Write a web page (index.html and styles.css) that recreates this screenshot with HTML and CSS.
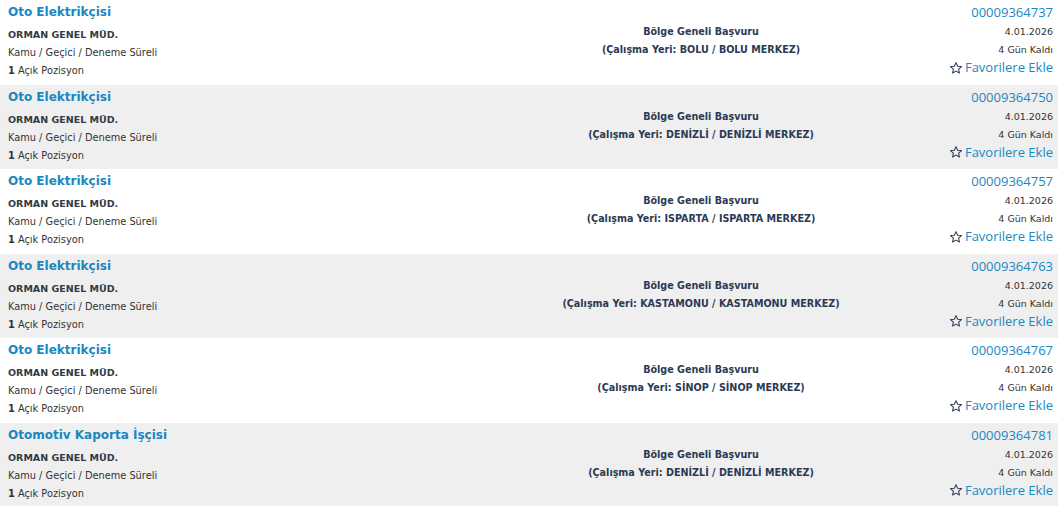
FILE: index.html
```html
<!DOCTYPE html>
<html lang="tr">
<head>
<meta charset="utf-8">
<link rel="stylesheet" href="styles.css">
</head>
<body>
<div class="list">
  <div class="row">
    <div class="col-left">
      <a class="title">Oto Elektrikçisi</a>
      <div class="org">ORMAN GENEL MÜD.</div>
      <div class="meta">Kamu / Geçici / Deneme Süreli</div>
      <div class="meta"><b>1</b> Açık Pozisyon</div>
    </div>
    <div class="col-mid">
      <div>Bölge Geneli Başvuru</div>
      <div>(Çalışma Yeri: BOLU / BOLU MERKEZ)</div>
    </div>
    <div class="col-right">
      <a class="code">00009364737</a>
      <div class="date">4.01.2026</div>
      <div class="date">4 Gün Kaldı</div>
      <a class="fav"><svg class="star" viewBox="0 0 24 24"><path d="M12 2.8l2.8 6.1 6.6.7-4.9 4.5 1.4 6.5L12 17.3l-5.9 3.3 1.4-6.5-4.9-4.5 6.6-.7z"/></svg>Favorilere Ekle</a>
    </div>
  </div>
  <div class="row alt">
    <div class="col-left">
      <a class="title">Oto Elektrikçisi</a>
      <div class="org">ORMAN GENEL MÜD.</div>
      <div class="meta">Kamu / Geçici / Deneme Süreli</div>
      <div class="meta"><b>1</b> Açık Pozisyon</div>
    </div>
    <div class="col-mid">
      <div>Bölge Geneli Başvuru</div>
      <div>(Çalışma Yeri: DENİZLİ / DENİZLİ MERKEZ)</div>
    </div>
    <div class="col-right">
      <a class="code">00009364750</a>
      <div class="date">4.01.2026</div>
      <div class="date">4 Gün Kaldı</div>
      <a class="fav"><svg class="star" viewBox="0 0 24 24"><path d="M12 2.8l2.8 6.1 6.6.7-4.9 4.5 1.4 6.5L12 17.3l-5.9 3.3 1.4-6.5-4.9-4.5 6.6-.7z"/></svg>Favorilere Ekle</a>
    </div>
  </div>
  <div class="row">
    <div class="col-left">
      <a class="title">Oto Elektrikçisi</a>
      <div class="org">ORMAN GENEL MÜD.</div>
      <div class="meta">Kamu / Geçici / Deneme Süreli</div>
      <div class="meta"><b>1</b> Açık Pozisyon</div>
    </div>
    <div class="col-mid">
      <div>Bölge Geneli Başvuru</div>
      <div>(Çalışma Yeri: ISPARTA / ISPARTA MERKEZ)</div>
    </div>
    <div class="col-right">
      <a class="code">00009364757</a>
      <div class="date">4.01.2026</div>
      <div class="date">4 Gün Kaldı</div>
      <a class="fav"><svg class="star" viewBox="0 0 24 24"><path d="M12 2.8l2.8 6.1 6.6.7-4.9 4.5 1.4 6.5L12 17.3l-5.9 3.3 1.4-6.5-4.9-4.5 6.6-.7z"/></svg>Favorilere Ekle</a>
    </div>
  </div>
  <div class="row alt">
    <div class="col-left">
      <a class="title">Oto Elektrikçisi</a>
      <div class="org">ORMAN GENEL MÜD.</div>
      <div class="meta">Kamu / Geçici / Deneme Süreli</div>
      <div class="meta"><b>1</b> Açık Pozisyon</div>
    </div>
    <div class="col-mid">
      <div>Bölge Geneli Başvuru</div>
      <div>(Çalışma Yeri: KASTAMONU / KASTAMONU MERKEZ)</div>
    </div>
    <div class="col-right">
      <a class="code">00009364763</a>
      <div class="date">4.01.2026</div>
      <div class="date">4 Gün Kaldı</div>
      <a class="fav"><svg class="star" viewBox="0 0 24 24"><path d="M12 2.8l2.8 6.1 6.6.7-4.9 4.5 1.4 6.5L12 17.3l-5.9 3.3 1.4-6.5-4.9-4.5 6.6-.7z"/></svg>Favorilere Ekle</a>
    </div>
  </div>
  <div class="row">
    <div class="col-left">
      <a class="title">Oto Elektrikçisi</a>
      <div class="org">ORMAN GENEL MÜD.</div>
      <div class="meta">Kamu / Geçici / Deneme Süreli</div>
      <div class="meta"><b>1</b> Açık Pozisyon</div>
    </div>
    <div class="col-mid">
      <div>Bölge Geneli Başvuru</div>
      <div>(Çalışma Yeri: SİNOP / SİNOP MERKEZ)</div>
    </div>
    <div class="col-right">
      <a class="code">00009364767</a>
      <div class="date">4.01.2026</div>
      <div class="date">4 Gün Kaldı</div>
      <a class="fav"><svg class="star" viewBox="0 0 24 24"><path d="M12 2.8l2.8 6.1 6.6.7-4.9 4.5 1.4 6.5L12 17.3l-5.9 3.3 1.4-6.5-4.9-4.5 6.6-.7z"/></svg>Favorilere Ekle</a>
    </div>
  </div>
  <div class="row alt">
    <div class="col-left">
      <a class="title">Otomotiv Kaporta İşçisi</a>
      <div class="org">ORMAN GENEL MÜD.</div>
      <div class="meta">Kamu / Geçici / Deneme Süreli</div>
      <div class="meta"><b>1</b> Açık Pozisyon</div>
    </div>
    <div class="col-mid">
      <div>Bölge Geneli Başvuru</div>
      <div>(Çalışma Yeri: DENİZLİ / DENİZLİ MERKEZ)</div>
    </div>
    <div class="col-right">
      <a class="code">00009364781</a>
      <div class="date">4.01.2026</div>
      <div class="date">4 Gün Kaldı</div>
      <a class="fav"><svg class="star" viewBox="0 0 24 24"><path d="M12 2.8l2.8 6.1 6.6.7-4.9 4.5 1.4 6.5L12 17.3l-5.9 3.3 1.4-6.5-4.9-4.5 6.6-.7z"/></svg>Favorilere Ekle</a>
    </div>
  </div>
</div>
</body>
</html>
```
FILE: styles.css
```css
html, body {
  margin: 0;
  padding: 0;
  background: #ffffff;
}
body {
  font-family: "DejaVu Sans", Verdana, sans-serif;
  color: #333333;
}
.list {
  width: 1058px;
}
.row {
  display: grid;
  grid-template-columns: 492px 402px 1fr;
  height: 84.5px;
  box-sizing: border-box;
  padding: 2px 5px 0 8px;
  background: #ffffff;
}
.row.alt {
  background: #efefef;
}
.col-left {
  display: flex;
  flex-direction: column;
}
.title {
  font-size: 12px;
  font-weight: bold;
  color: #1a87c2;
  line-height: 20px;
}
.org {
  font-size: 9.5px;
  font-weight: bold;
  color: #333a45;
  line-height: 18px;
  margin-top: 4px;
}
.meta {
  font-size: 9.8px;
  color: #333333;
  line-height: 18px;
}
.meta b {
  font-weight: bold;
}
.col-mid {
  display: flex;
  flex-direction: column;
  align-items: center;
  padding-top: 21px;
  font-size: 9.6px;
  font-weight: bold;
  color: #2c3a55;
  line-height: 18px;
}
.col-right {
  display: flex;
  flex-direction: column;
  align-items: flex-end;
}
.code {
  font-family: "Open Sans", sans-serif;
  font-size: 13px;
  color: #1a87c2;
  line-height: 20px;
}
.date {
  font-size: 9.5px;
  color: #333333;
  line-height: 18px;
}
.date:first-of-type {
  margin-top: 1px;
}
.fav {
  display: flex;
  align-items: center;
  gap: 2px;
  font-family: "Open Sans", sans-serif;
  font-size: 13px;
  color: #1a87c2;
  line-height: 17px;
}
.star {
  width: 14px;
  height: 14px;
  fill: none;
  stroke: #2c3a55;
  stroke-width: 1.8;
  stroke-linejoin: round;
}
```
